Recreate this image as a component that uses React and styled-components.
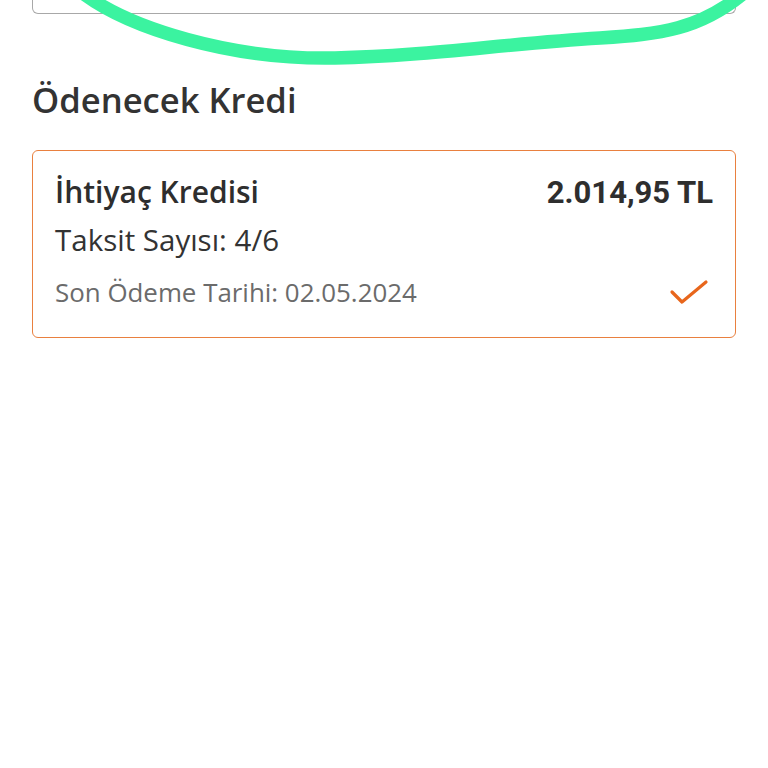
import React from 'react';
import styled, { createGlobalStyle } from 'styled-components';

const GlobalStyle = createGlobalStyle`
  html, body {
    margin: 0;
    padding: 0;
    background: #ffffff;
  }
  body {
    font-family: "Open Sans", "Noto Sans", sans-serif;
    color: #333333;
  }
`

const Page = styled.div`
  position: relative;
  width: 768px;
  height: 768px;
  overflow: hidden;
  padding: 0 32px;
  box-sizing: border-box;
`

const InputStub = styled.div`
  height: 13px;
  border: 1.5px solid #a8a8a8;
  border-top: none;
  border-radius: 0 0 6px 6px;
`

const Heading = styled.h2`
  margin: 64px 0 0 0;
  font-size: 34.6px;
  font-weight: 600;
  line-height: 44px;
  color: #333333;
`

const Card = styled.div`
  margin-top: 28px;
  height: 188px;
  box-sizing: border-box;
  border: 1.5px solid #e9803f;
  border-radius: 6px;
  padding: 20px 22px 0 22px;
  display: flex;
  flex-direction: column;
`

const Row = styled.div`
  display: flex;
  justify-content: space-between;
  align-items: center;
  height: ${p => p.h}px;
`

const Title = styled.span`
  font-size: 30px;
  font-weight: 600;
  color: #2e2e2e;
`

const Amount = styled.span`
  font-family: Roboto, "Liberation Sans", sans-serif;
  font-size: 31px;
  font-weight: 700;
  color: #2e2e2e;
  margin-top: 2px;
`

const Installments = styled.span`
  font-size: 29.5px;
  font-weight: 400;
  color: #333333;
`

const DueDate = styled.span`
  font-size: 25.9px;
  font-weight: 400;
  color: #6b6b6b;
`

const CheckIcon = styled.svg`
  margin-right: 4px;
`

const Scribble = styled.svg`
  position: absolute;
  top: 0;
  left: 0;
  pointer-events: none;
`

const Check = () => (
  <CheckIcon width="40" height="30" viewBox="0 0 40 30">
    <path d="M3 15 L13 25 L37 5" fill="none" stroke="#e8661c" strokeWidth="3.2" strokeLinecap="round" strokeLinejoin="round" />
  </CheckIcon>
)

export default function App() {
  return (
    <Page>
      <GlobalStyle />
      <InputStub />
      <Heading>Ödenecek Kredi</Heading>
      <Card>
        <Row h={40}>
          <Title>İhtiyaç Kredisi</Title>
          <Amount>2.014,95 TL</Amount>
        </Row>
        <Row h={56}>
          <Installments>Taksit Sayısı: 4/6</Installments>
        </Row>
        <Row h={50}>
          <DueDate>Son Ödeme Tarihi: 02.05.2024</DueDate>
          <Check />
        </Row>
      </Card>
      <Scribble width="768" height="80" viewBox="0 0 768 80">
        <path
          d="M84 -6 C130 28, 230 60, 335 58 C430 56, 500 44, 600 38 C660 34, 700 30, 745 -8"
          fill="none"
          stroke="#3bf3a0"
          strokeWidth="13.5"
          strokeLinecap="round"
        />
      </Scribble>
    </Page>
  );
}
